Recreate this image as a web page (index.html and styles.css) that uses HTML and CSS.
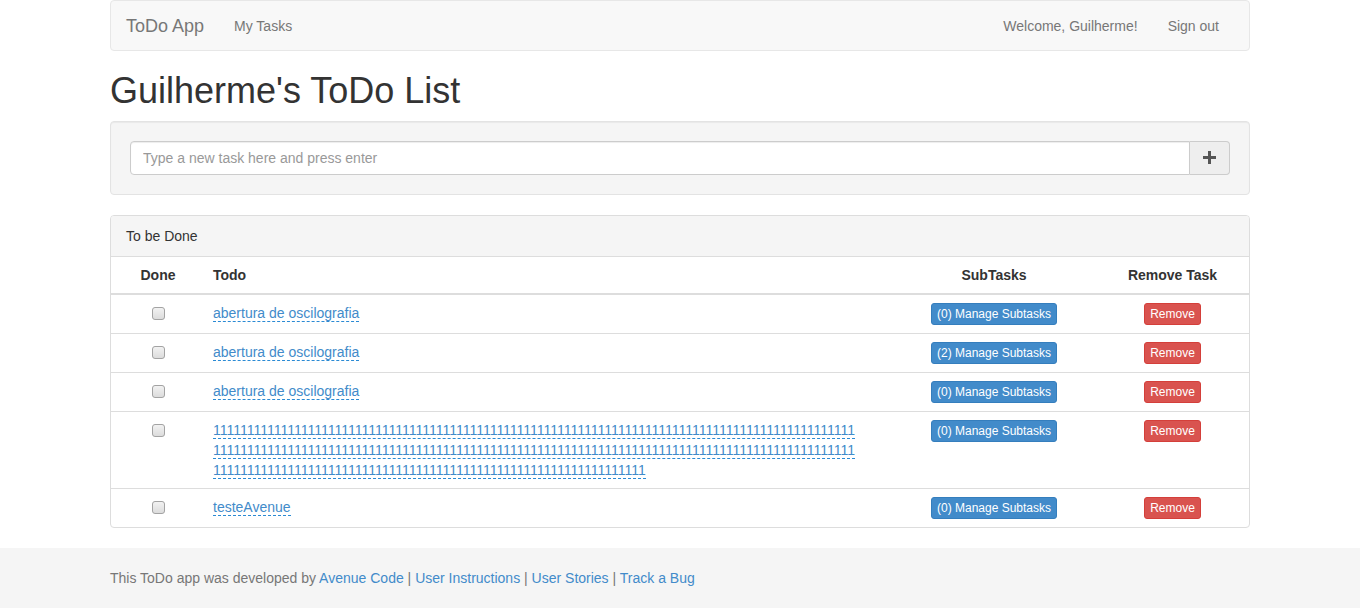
FILE: index.html
```html
<!DOCTYPE html>
<html lang="en">
<head>
<meta charset="utf-8">
<title>ToDo App</title>
<link rel="stylesheet" href="styles.css">
</head>
<body>
<div class="container">
  <nav class="navbar">
    <a class="brand" href="#">ToDo App</a>
    <a class="nav-link" href="#">My Tasks</a>
    <div class="nav-right">
      <a class="nav-link" href="#">Welcome, Guilherme!</a>
      <a class="nav-link" href="#">Sign out</a>
    </div>
  </nav>

  <h1 class="title">Guilherme's ToDo List</h1>

  <div class="well">
    <div class="input-group">
      <input class="task-input" type="text" placeholder="Type a new task here and press enter">
      <button class="add-btn" type="button" aria-label="Add">
        <svg width="13" height="13" viewBox="0 0 13 13"><path d="M5 0h3v5h5v3H8v5H5V8H0V5h5z" fill="#555"/></svg>
      </button>
    </div>
  </div>

  <div class="panel">
    <div class="panel-heading">To be Done</div>
    <table class="tasks">
      <colgroup>
        <col class="c-done"><col class="c-todo"><col class="c-sub"><col class="c-rem">
      </colgroup>
      <thead>
        <tr>
          <th class="center">Done</th>
          <th>Todo</th>
          <th class="center">SubTasks</th>
          <th class="center">Remove Task</th>
        </tr>
      </thead>
      <tbody>
        <tr>
          <td><input class="chk" type="checkbox"></td>
          <td><div class="todo-text"><a href="#" class="editable">abertura de oscilografia</a></div></td>
          <td class="center"><button class="btn btn-primary">(0) Manage Subtasks</button></td>
          <td class="center"><button class="btn btn-danger">Remove</button></td>
        </tr>
        <tr>
          <td><input class="chk" type="checkbox"></td>
          <td><div class="todo-text"><a href="#" class="editable">abertura de oscilografia</a></div></td>
          <td class="center"><button class="btn btn-primary">(2) Manage Subtasks</button></td>
          <td class="center"><button class="btn btn-danger">Remove</button></td>
        </tr>
        <tr>
          <td><input class="chk" type="checkbox"></td>
          <td><div class="todo-text"><a href="#" class="editable">abertura de oscilografia</a></div></td>
          <td class="center"><button class="btn btn-primary">(0) Manage Subtasks</button></td>
          <td class="center"><button class="btn btn-danger">Remove</button></td>
        </tr>
        <tr>
          <td><input class="chk" type="checkbox"></td>
          <td><div class="todo-text"><a href="#" class="editable">11111111111111111111111111111111111111111111111111111111111111111111111111111111111111111111111111111111111111111111111111111111111111111111111111111111111111111111111111111111111111111111111111111111111111111111111111111111111111111111111111111111111111</a></div></td>
          <td class="center"><button class="btn btn-primary">(0) Manage Subtasks</button></td>
          <td class="center"><button class="btn btn-danger">Remove</button></td>
        </tr>
        <tr>
          <td><input class="chk" type="checkbox"></td>
          <td><div class="todo-text"><a href="#" class="editable">testeAvenue</a></div></td>
          <td class="center"><button class="btn btn-primary">(0) Manage Subtasks</button></td>
          <td class="center"><button class="btn btn-danger">Remove</button></td>
        </tr>
      </tbody>
    </table>
  </div>
</div>

<footer class="footer">
  <div class="container">
    <p class="footer-text">This ToDo app was developed by <a href="#">Avenue Code</a> | <a href="#">User Instructions</a> | <a href="#">User Stories</a> | <a href="#">Track a Bug</a></p>
  </div>
</footer>
</body>
</html>
```

FILE: styles.css
```css
* {
  box-sizing: border-box;
}

html, body {
  margin: 0;
  padding: 0;
}

body {
  font-family: "Liberation Sans", Arial, sans-serif;
  font-size: 14px;
  line-height: 20px;
  color: #333;
  background: #fff;
}

a {
  color: #428bca;
  text-decoration: none;
}

.container {
  width: 1170px;
  margin: 0 auto;
  padding: 0 15px;
}

/* Navbar */
.navbar {
  display: flex;
  align-items: center;
  height: 51px;
  background: #f8f8f8;
  border: 1px solid #e7e7e7;
  border-radius: 4px;
  margin-bottom: 20px;
}

.brand {
  padding: 15px;
  font-size: 18px;
  line-height: 20px;
  color: #777;
}

.nav-link {
  padding: 15px;
  color: #777;
  line-height: 20px;
}

.nav-right {
  display: flex;
  margin-left: auto;
  margin-right: 15px;
}

/* Title */
.title {
  margin: 0 0 10px;
  font-size: 36px;
  font-weight: 500;
  line-height: 1.1;
  color: #333;
}

/* Well */
.well {
  padding: 19px;
  background: #f5f5f5;
  border: 1px solid #e3e3e3;
  border-radius: 4px;
  box-shadow: inset 0 1px 1px rgba(0, 0, 0, 0.05);
  margin-bottom: 20px;
}

.input-group {
  display: flex;
  height: 34px;
}

.task-input {
  flex: 1;
  height: 34px;
  padding: 6px 12px;
  font-family: "Liberation Sans", Arial, sans-serif;
  font-size: 14px;
  color: #555;
  background: #fff;
  border: 1px solid #ccc;
  border-radius: 4px 0 0 4px;
  box-shadow: inset 0 1px 1px rgba(0, 0, 0, 0.075);
  outline: none;
}

.task-input::placeholder {
  color: #999;
}

.add-btn {
  width: 40px;
  height: 34px;
  padding: 0;
  display: flex;
  align-items: center;
  justify-content: center;
  background: #eee;
  border: 1px solid #ccc;
  border-left: 0;
  border-radius: 0 4px 4px 0;
}

/* Panel */
.panel {
  border: 1px solid #ddd;
  border-radius: 4px;
  margin-bottom: 20px;
  background: #fff;
}

.panel-heading {
  padding: 10px 15px;
  background: #f5f5f5;
  border-bottom: 1px solid #ddd;
  border-radius: 3px 3px 0 0;
}

.tasks {
  width: 100%;
  border-collapse: collapse;
  table-layout: fixed;
}

.c-done { width: 94px; }
.c-todo { width: 687px; }
.c-sub { width: 204px; }

.tasks th {
  padding: 8px;
  text-align: left;
  font-weight: bold;
  border-bottom: 2px solid #ddd;
  vertical-align: bottom;
}

.tasks td {
  padding: 8px;
  height: 38px;
  border-top: 1px solid #ddd;
  vertical-align: top;
}

.tasks tbody tr:first-child td {
  border-top: 0;
}

.tasks .center {
  text-align: center;
}

.chk {
  appearance: none;
  -webkit-appearance: none;
  display: block;
  width: 13px;
  height: 13px;
  margin: 4px auto 0;
  border: 1px solid #a3a3a3;
  border-radius: 3px;
  background: linear-gradient(#f2f2f2, #dcdcdc);
}

.todo-text {
  max-width: 645px;
  word-break: break-all;
}

.editable {
  color: #428bca;
  border-bottom: 1px dashed #2a8ad4;
}

.btn {
  display: inline-block;
  padding: 1px 5px;
  font-family: "Liberation Sans", Arial, sans-serif;
  font-size: 12px;
  line-height: 18px;
  color: #fff;
  border: 1px solid transparent;
  border-radius: 3px;
  cursor: pointer;
}

.btn-primary {
  background: #428bca;
  border-color: #357ebd;
}

.btn-danger {
  background: #d9534f;
  border-color: #d43f3a;
}

/* Footer */
.footer {
  background: #f5f5f5;
  height: 60px;
  padding: 20px 0;
}

.footer-text {
  margin: 0;
  color: #777;
}
```
